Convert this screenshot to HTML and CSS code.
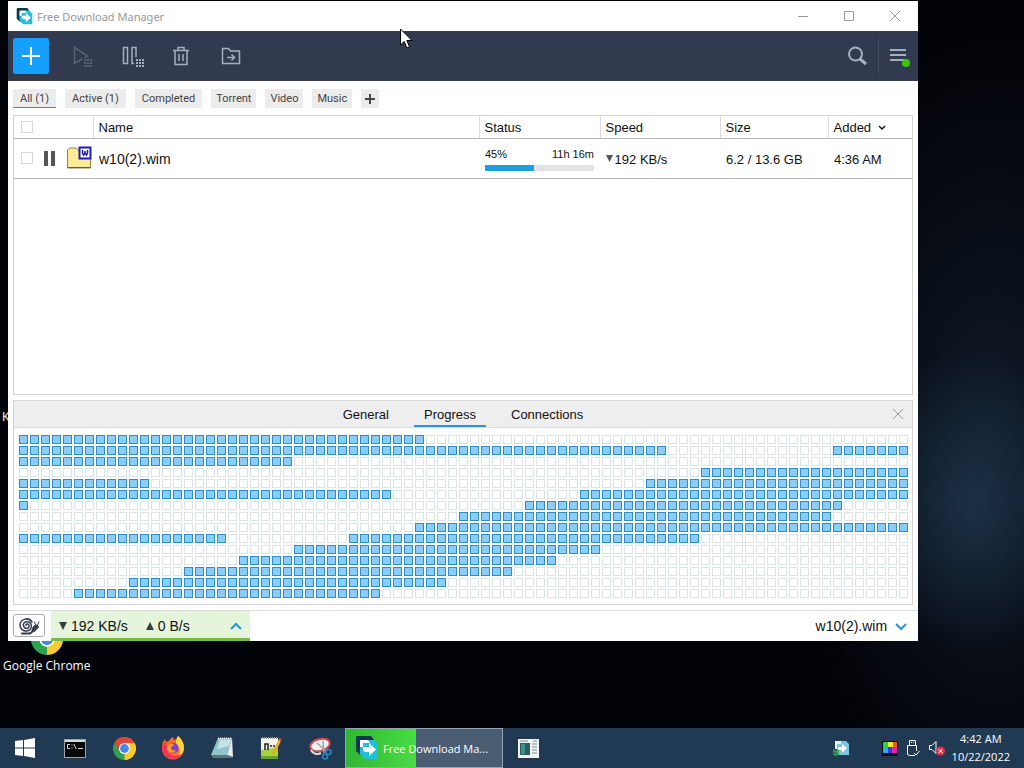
FILE: index.html
```
<!DOCTYPE html>
<html lang="en">
<head>
    <meta charset="UTF-8">
    <meta name="viewport" content="width=device-width, initial-scale=1.0">
    <title>Free Download Manager</title>
    <link rel="stylesheet" href="styles.css">
</head>
<body>
    <!-- shared icons -->
    <svg class="defs" aria-hidden="true">
        <symbol id="fdm" viewBox="0 0 24 24">
            <path d="M2 0h14l3 4H7v15H5l-4-4V1z" fill="#0b3a4f"/>
            <path d="M5 4h14l4 4v15H10l-5-5z" fill="#1fc0dc"/>
            <path d="M5 4h8l2 3H8v4H5z" fill="#fff"/>
            <path d="M8 11h6V7l7 6.500-7 6.500v-4H10l-2-2z" fill="#fff"/>
        </symbol>
        <symbol id="chrome" viewBox="0 0 24 24">
            <path d="M12 12L1.600 6A12 12 0 0 1 22.400 6z" fill="#e04638"/>
            <path d="M12 12L22.400 6A12 12 0 0 1 12 24z" fill="#fbcb2e"/>
            <path d="M12 12L12 24A12 12 0 0 1 1.600 6z" fill="#2fa152"/>
            <path d="M12 6h10.400L17 15l-5 9z" fill="#fbcb2e"/>
            <path d="M12 6H22.400A12 12 0 0 0 1.600 6L7 15z" fill="#e04638"/>
            <circle cx="12" cy="12" r="5.800" fill="#fff"/>
            <circle cx="12" cy="12" r="4.600" fill="#4286ee"/>
        </symbol>
    </svg>

    <main class="desktop">
        <div class="shortcut shortcut-k">K</div>
        <div class="shortcut shortcut-chrome">
            <svg width="32" height="32"><use href="#chrome"/></svg>
            <span>Google Chrome</span>
        </div>

        <section class="window">
            <header class="titlebar">
                <svg width="17" height="17"><use href="#fdm"/></svg>
                <span class="title">Free Download Manager</span>
                <button class="win-btn" aria-label="Minimize"><svg width="12" height="12"><path d="M1 6.500h10"/></svg></button>
                <button class="win-btn" aria-label="Maximize"><svg width="12" height="12"><path d="M1.500 1.500h9v9h-9z"/></svg></button>
                <button class="win-btn" aria-label="Close"><svg width="12" height="12"><path d="M1 1l10 10M11 1L1 11"/></svg></button>
            </header>

            <nav class="toolbar">
                <button class="tool add" aria-label="Add download">
                    <svg width="20" height="20"><path d="M10 1v18M1 10h18" stroke="#fff" stroke-width="2"/></svg>
                </button>
                <button class="tool" aria-label="Start all" disabled>
                    <svg width="24" height="24" viewBox="0 0 24 24">
                        <path d="M13 15l-7.500 4.500v-16L18.500 12l-3 2"/>
                        <path class="dots" d="M15 15h2v2h-2zm3 0h2v2h-2zm3 0h2v2h-2zM15 18h2v2h-2zm3 0h2v2h-2zm3 0h2v2h-2zM15 21h2v2h-2zm3 0h2v2h-2zm3 0h2v2h-2z"/>
                    </svg>
                </button>
                <button class="tool" aria-label="Pause all">
                    <svg width="24" height="24" viewBox="0 0 24 24">
                        <path d="M4.500 3.500h4v16h-4zM17 13V3.500h-4v16h2"/>
                        <path class="dots" d="M17 15h2v2h-2zm3 0h2v2h-2zm3 0h2v2h-2zM17 18h2v2h-2zm3 0h2v2h-2zm3 0h2v2h-2zM17 21h2v2h-2zm3 0h2v2h-2zm3 0h2v2h-2z"/>
                    </svg>
                </button>
                <button class="tool" aria-label="Delete">
                    <svg width="20" height="20" viewBox="0 0 20 20">
                        <path d="M2 4.500h16M7 4V1.500h6V4M4 5v13.500h12V5M8 8v7M12 8v7"/>
                    </svg>
                </button>
                <button class="tool" aria-label="Move to folder">
                    <svg width="20" height="20" viewBox="0 0 20 20">
                        <path d="M1.500 17.500v-15h6l2 2.500h9v12.500zM6 11.500h7M10.500 8.500l3 3-3 3"/>
                    </svg>
                </button>
                <div class="spacer"></div>
                <button class="tool search" aria-label="Search">
                    <svg width="20" height="20" viewBox="0 0 20 20"><circle cx="8.500" cy="8" r="6.500" stroke-width="2"/><path d="M13 13l6 5" stroke-width="3"/></svg>
                </button>
                <button class="tool menu" aria-label="Menu">
                    <svg width="22" height="22" viewBox="0 0 22 22"><path d="M2 5h16M2 10h16M2 15h16" stroke-width="2"/><circle class="online" cx="18" cy="18" r="4"/></svg>
                </button>
            </nav>

            <div class="filters">
                <button class="filter active">All (1)</button>
                <button class="filter">Active (1)</button>
                <button class="filter">Completed</button>
                <button class="filter tag">Torrent</button>
                <button class="filter tag">Video</button>
                <button class="filter tag">Music</button>
                <button class="filter plus" aria-label="Add filter"><svg width="10" height="10"><path d="M5 0v10M0 5h10" stroke="#444" stroke-width="2"/></svg></button>
            </div>

            <div class="downloads">
                <table>
                    <colgroup>
                        <col class="col-tools"><col><col class="col-status"><col class="col-speed"><col class="col-size"><col class="col-added">
                    </colgroup>
                    <thead>
                        <tr>
                            <th class="tools"><input type="checkbox" aria-label="Select all"></th>
                            <th>Name</th>
                            <th>Status</th>
                            <th>Speed</th>
                            <th>Size</th>
                            <th>Added <svg class="sort" width="8" height="6"><path d="M1 1l3 3 3-3"/></svg></th>
                        </tr>
                    </thead>
                    <tbody>
                        <tr>
                            <td class="tools">
                                <div class="row-tools">
                                    <input type="checkbox" aria-label="Select w10(2).wim">
                                    <button class="pause" aria-label="Pause"><svg width="11" height="15"><path d="M0 0h4v15H0zM7 0h4v15H7z" fill="#555"/></svg></button>
                                    <svg width="26" height="24" viewBox="0 0 26 24">
                                        <path d="M1.500 22V4l2-2h7l2 2.500h12V22z" fill="#fbeb98" stroke="#93853f"/>
                                        <path d="M2 21.500h22.500" stroke="#6b602c"/>
                                        <path d="M13.500 1.500h11v11h-11z" fill="#fff" stroke="#1c1cb8" stroke-width="2"/>
                                        <path d="M16.500 4v3l1 2 1.500-2 1.500 2 1-2V4M19 5v3" fill="none" stroke="#1c1cb8" stroke-width="1.500"/>
                                    </svg>
                                </div>
                            </td>
                            <td class="name">w10(2).wim</td>
                            <td>
                                <div class="status-text"><span>45%</span><span>11h 16m</span></div>
                                <div class="bar"><div class="bar-fill" style="width: 45%"></div></div>
                            </td>
                            <td class="speed"><svg width="7" height="7"><path d="M0 0h7L3.500 7z" fill="#555"/></svg> 192 KB/s</td>
                            <td>6.2 / 13.6 GB</td>
                            <td>4:36 AM</td>
                        </tr>
                    </tbody>
                </table>
            </div>

            <section class="details">
                <div class="tabs">
                    <button class="tab">General</button>
                    <button class="tab current">Progress</button>
                    <button class="tab">Connections</button>
                    <button class="tabs-close" aria-label="Close panel"><svg width="12" height="12"><path d="M1 1l10 10M11 1L1 11" stroke="#999"/></svg></button>
                </div>
                <div class="pieces" id="pieces"></div>
            </section>

            <footer class="statusbar">
                <button class="snail" aria-label="Snail mode">
                    <svg width="22" height="18" viewBox="0 0 22 18" fill="none" stroke="#333c4c" stroke-linecap="round">
                        <path d="M8 8.500a1.500 1.500 0 0 1 2-1.500a2.500 2.500 0 0 1-1 4.500a3.500 3.500 0 0 1-3-5.500a4.500 4.500 0 0 1 7 1a5 5 0 0 1-4 7a6 6 0 0 1-7-6a6.500 6.500 0 0 1 12-3" stroke-width="1.500"/>
                        <path d="M4 16.500h8l5-4" stroke-width="2"/>
                        <path d="M14 14c0-3 2-6 4-6s3 2 2 3-2 1-3 3z" fill="#333c4c"/>
                        <path d="M17.500 8l-1-3M19.500 8l1.500-3"/>
                    </svg>
                </button>
                <button class="speeds">
                    <svg width="8" height="8"><path d="M0 0h8L4 8z" fill="#33423a"/></svg>
                    <span class="down">192 KB/s</span>
                    <svg width="8" height="8"><path d="M0 8h8L4 0z" fill="#33423a"/></svg>
                    <span>0 B/s</span>
                    <svg class="chevron" width="12" height="8"><path d="M1 7l5-5 5 5"/></svg>
                </button>
                <button class="current-file">w10(2).wim <svg class="chevron" width="12" height="8"><path d="M1 1l5 5 5-5"/></svg></button>
            </footer>
        </section>

        <svg class="cursor" width="13" height="21" viewBox="0 0 13 21"><path d="M.5 1v16l3.700-3.500 2.700 6.500 2.600-1.200L6.800 12.500H12z" fill="#fff" stroke="#000"/></svg>
    </main>

    <footer class="taskbar">
        <button class="task start" aria-label="Start">
            <svg width="20" height="20"><path d="M0 3l8-1v7.500H0zM9 2l11-2v9.500H9zM0 10.500h8V18l-8-1zM9 10.500h11V20L9 18z" fill="#fff"/></svg>
        </button>
        <button class="task" aria-label="Command Prompt">
            <svg width="22" height="19"><path d="M0 0h22v19H0z" fill="#9ba3a8"/><path d="M1 3h20v15H1z" fill="#080808"/><path d="M1 1h20v2H1z" fill="#d6dadd"/><path d="M6 5.500H3.500v4H6M8 5.500v1M8 8.500v1M10 5l2 5M14 9.500h5" stroke="#ddd" fill="none"/></svg>
        </button>
        <button class="task" aria-label="Google Chrome"><svg width="23" height="23"><use href="#chrome"/></svg></button>
        <button class="task" aria-label="Firefox">
            <svg width="24" height="24" viewBox="0 0 24 24">
                <path d="M2 6l2-3 1 3 3-1c1-2 2-3 4-4l1 3c3-1 4-2 4-4 4 3 6 8 6 12a11 11 0 0 1-22 1c0-3 0-5 1-7z" fill="#ff6a2b"/>
                <path d="M17 0c4 3 6 8 6 12 0 5-4 9-8 10 4-4 5-10 1-13-2-2-1-6 1-9z" fill="#ffd23c"/>
                <path d="M1 13c1 6 6 10 11 10 4 0 8-2 10-6-4 3-9 4-13 1-3-2-3-5-1-7-3 0-4-2-3-5-3 1-4 4-4 7z" fill="#f5345d"/>
                <circle cx="12.500" cy="12" r="5" fill="#7a45c9"/>
                <path d="M7 9c2-2 4-1 6 0-1 2-3 1-3 3s3 3 5 2c-2 4-8 3-9-1z" fill="#ff9a2b"/>
            </svg>
        </button>
        <button class="task" aria-label="Notepad">
            <svg width="24" height="22" viewBox="0 0 24 22"><path d="M8 1h14l-5 17H1z" fill="#8fc5cc"/><path d="M10 3h11l-2 6-12 3z" fill="#c4e3e6"/><path d="M22 1l1 19-6-2z" fill="#e7eeee"/><path d="M1 18h16l6 2-1 1H3z" fill="#5d7478"/><path d="M8 1.500h14" stroke="#eee" stroke-width="2" stroke-dasharray="1 1"/></svg>
        </button>
        <button class="task" aria-label="Notepad++">
            <svg width="22" height="24" viewBox="0 0 22 24"><path d="M1 2h17v21H1z" fill="#f3f5e8"/><path d="M1 14l17-3v12H1z" fill="#a4d33b"/><path d="M1 20h17v3H1z" fill="#65a32c"/><path d="M2 2h15" stroke="#999" stroke-width="2" stroke-dasharray="1 1"/><path d="M5 14V8h3v6M10 10h2M13 10h2" stroke="#222" stroke-width="1.500" fill="none"/><path d="M19 3l2 2-6 12-3 2 1-4z" fill="#f0a52c"/><path d="M19 1l3 2-1 2-2-2z" fill="#c43c3c"/></svg>
        </button>
        <button class="task" aria-label="Snipping Tool">
            <svg width="24" height="24" viewBox="0 0 24 24"><ellipse cx="12" cy="9" rx="10" ry="6" transform="rotate(-15 12 9)" fill="#f5f0f0" stroke="#d7474b" stroke-width="2"/><path d="M3 14c2 4 6 5 10 3" stroke="#ddd" stroke-width="2" fill="none"/><path d="M9 7l9 8M15 5l1 12" stroke="#9aa4aa" stroke-width="1.500"/><g fill="none" stroke="#2f86c4" stroke-width="1.500"><circle cx="20.500" cy="16" r="2.500"/><circle cx="17" cy="20.500" r="2.500"/></g></svg>
        </button>
        <button class="task running">
            <svg width="24" height="24"><use href="#fdm"/></svg>
            <span>Free Download Ma...</span>
        </button>
        <button class="task" aria-label="Server window">
            <svg width="21" height="19"><path d="M0 0h21v19H0z" fill="#f0f3f3"/><path d="M2 4h10v12H2z" fill="#2c5d62"/><path d="M3 5h4v10H3z" fill="#3f8f86"/><path d="M14 5h5M14 8h5M14 11h5M14 14h5M2 2h8M15 2h4" stroke="#7e8d92"/></svg>
        </button>
        <div class="tray">
            <svg class="tray-fdm" width="17" height="16"><path d="M2 1h11l3 3v11H5z" fill="#77c6df"/><path d="M2 1h6v3H4v5H2z" fill="#e5f3f7"/><path d="M5 7h4V4l5 4-5 5v-3H5z" fill="#fff"/><path d="M0 10l3 2 3-2M0 13l3 2 3-2" stroke="#36a04a" stroke-width="2" fill="none"/></svg>
            <svg width="16" height="15"><path d="M0 0h16v15H0z" fill="#111"/><path d="M1 1h5v5H1z" fill="#2fd13c"/><path d="M6 1h5v5H6z" fill="#f4e52c"/><path d="M11 1h4v5h-4z" fill="#f25b22"/><path d="M1 6h5v6H1z" fill="#25aef0"/><path d="M6 6h4v6H6z" fill="#3a35e6"/><path d="M10 6h5v6h-5z" fill="#e022b2"/></svg>
            <svg width="13" height="17" fill="none" stroke="#fff"><path d="M2.500 5V.5h6V5M8 15.500H2.500l-2-1V5.500h9V11M4 2.500h1M6 2.500h1M7 13l2 2 3.500-4"/></svg>
            <svg width="16" height="16"><path d="M.5 5.500H3l4-4v12l-4-4H.5z" fill="none" stroke="#fff"/><circle cx="11.500" cy="11" r="4.500" fill="#d9304c"/><path d="M9.500 9l4 4M13.500 9l-4 4" stroke="#fff"/></svg>
            <div class="clock"><time>4:42 AM</time><time>10/22/2022</time></div>
        </div>
    </footer>

    <script>
        // downloaded pieces of the file, [first, last]
        const COLS = 81;
        const ROWS = 15;
        const done = [
            [[0, 36]],
            [[0, 58], [74, 80]],
            [[0, 24]],
            [[62, 80]],
            [[0, 11], [57, 80]],
            [[0, 33], [51, 80]],
            [[0, 0], [46, 74]],
            [[40, 73]],
            [[36, 80]],
            [[0, 18], [30, 61]],
            [[25, 52]],
            [[20, 48]],
            [[15, 44]],
            [[10, 38]],
            [[5, 32]]
        ];
        const pieces = document.getElementById('pieces');
        for (let row = 0; row < ROWS; row++) {
            for (let col = 0; col < COLS; col++) {
                const piece = document.createElement('i');
                if (done[row].some(([from, to]) => col >= from && col <= to)) {
                    piece.className = 'done';
                }
                pieces.appendChild(piece);
            }
        }
    </script>
</body>
</html>
```
FILE: styles.css
```
* {
    box-sizing: border-box;
}

body {
    margin: 0;
    height: 100vh;
    display: flex;
    flex-direction: column;
    overflow: hidden;
    background: #020308;
    font-family: "Liberation Sans", Arial, sans-serif;
    font-size: 13px;
    color: #111;
}

button {
    padding: 0;
    border: none;
    background: none;
    font: inherit;
    color: inherit;
}

svg {
    flex: none;
}

.defs {
    position: absolute;
    width: 0;
    height: 0;
}

/* desktop */
.desktop {
    position: relative;
    flex: 1;
    background:
        radial-gradient(ellipse 110px 150px at 95% 69%, #1b3045, transparent),
        radial-gradient(ellipse 200px 400px at 97% 60%, #101a28, transparent),
        #020308;
}

.shortcut {
    position: absolute;
    color: #fff;
    font-family: "Open Sans", "Noto Sans", sans-serif;
    font-size: 12px;
    line-height: 16px;
}

.shortcut-k {
    left: 2px;
    top: 409px;
}

.shortcut-chrome {
    left: 3px;
    top: 623px;
    display: flex;
    flex-direction: column;
    align-items: center;
    gap: 3px;
}

.cursor {
    position: absolute;
    left: 400px;
    top: 28px;
}

/* main window */
.window {
    position: absolute;
    left: 8px;
    right: 106px;
    top: 1px;
    bottom: 87px;
    display: flex;
    flex-direction: column;
    background: #fff;
}

.titlebar {
    display: flex;
    align-items: center;
    height: 30px;
    padding: 0 2px 0 8px;
    gap: 4px;
}

.title {
    flex: 1;
    font-family: "Noto Sans", "Open Sans", sans-serif;
    font-size: 11px;
    color: #999;
}

.win-btn {
    width: 42px;
    height: 30px;
}

.win-btn svg {
    display: block;
    margin: auto;
    fill: none;
    stroke: #999;
}

.toolbar {
    display: flex;
    align-items: center;
    gap: 14px;
    height: 50px;
    padding-left: 5px;
    background: #323a4f;
}

.tool {
    display: flex;
    align-items: center;
    justify-content: center;
    width: 36px;
    height: 36px;
    border-radius: 3px;
}

.tool svg {
    fill: none;
    stroke: #a3b0c2;
    stroke-width: 1.5;
    overflow: visible;
}

.tool:disabled svg {
    opacity: 0.35;
}

.tool .dots {
    fill: #a3b0c2;
    stroke: none;
}

.tool.add {
    background: #16a0fd;
}

.spacer {
    flex: 1;
}

.search {
    margin-right: -11px;
}

.menu {
    width: 40px;
    border-left: 1px solid #454d62;
    border-radius: 0;
}

.menu .online {
    fill: #3fc40c;
    stroke: none;
}

/* filters */
.filters {
    display: flex;
    gap: 9px;
    padding: 8px 5px 7px;
}

.filter {
    height: 19px;
    padding: 0 7px;
    background: #ececec;
    font-family: Roboto, "Noto Sans", sans-serif;
    font-size: 11px;
    line-height: 19px;
    color: #444;
}

.filter.active {
    border-bottom: 1px solid #2b8fd8;
}

.filter.tag {
    padding: 0 5px;
}

.filter.plus {
    padding: 0 4px;
}

.filter.plus svg {
    display: block;
}

/* downloads list */
.downloads {
    flex: 1;
    margin: 0 5px;
    border: 1px solid #d5d5d5;
}

table {
    width: 100%;
    table-layout: fixed;
    border-collapse: collapse;
}

.col-tools {
    width: 79px;
}

.col-status {
    width: 121px;
}

.col-speed {
    width: 120px;
}

.col-size {
    width: 108px;
}

.col-added {
    width: 84px;
}

th {
    height: 22px;
    padding: 2px 5px 0;
    border-left: 1px solid #dcdcdc;
    border-bottom: 1px solid #b8b8b8;
    font-weight: normal;
    text-align: left;
}

th:first-child {
    border-left: none;
}

td {
    height: 40px;
    padding: 2px 6px 0;
    border-bottom: 1px solid #b8b8b8;
}

td.name {
    font-size: 14px;
}

th.tools,
td.tools {
    padding: 0 0 0 7px;
}

input[type="checkbox"] {
    appearance: none;
    display: block;
    width: 12px;
    height: 12px;
    margin: 0;
    border: 1px solid #d8d8d8;
    background: #fff;
}

.row-tools {
    display: flex;
    align-items: center;
    gap: 11px;
}

.pause svg {
    display: block;
}

.sort {
    margin-left: 3px;
    vertical-align: 1px;
    fill: none;
    stroke: #111;
    stroke-width: 1.5;
}

.status-text {
    display: flex;
    justify-content: space-between;
    font-size: 11px;
    line-height: 13px;
}

.bar {
    height: 6px;
    margin-top: 4px;
    background: #e3e3e3;
}

.bar-fill {
    height: 100%;
    background: #1f9ede;
}

.speed svg {
    vertical-align: 2px;
    margin-right: -2px;
}

/* details panel */
.details {
    margin: 5px 5px;
    border: 1px solid #d5d5d5;
}

.tabs {
    position: relative;
    display: flex;
    justify-content: center;
    gap: 15px;
    height: 27px;
    background: #eee;
    border-bottom: 1px solid #dcdcdc;
}

.tab {
    padding: 2px 10px 0;
    border-bottom: 2px solid transparent;
}

.tab.current {
    border-color: #2b94d6;
}

.tabs-close {
    position: absolute;
    right: 8px;
    top: 7px;
}

.tabs-close svg {
    display: block;
}

.pieces {
    display: grid;
    grid-template-columns: repeat(81, 9px);
    grid-auto-rows: 9px;
    gap: 2px;
    padding: 7px 5px 6px;
}

.pieces i {
    border: 1px solid #dbe5e6;
}

.pieces .done {
    border-color: #2b8fc6;
    background: #8accfa;
}

/* status bar */
.statusbar {
    display: flex;
    height: 31px;
    padding-left: 5px;
    border-top: 1px solid #ddd;
    font-size: 14px;
}

.snail {
    width: 32px;
    height: 23px;
    margin: 3px 6px 0 0;
    border: 1px solid #aaa;
    border-radius: 3px;
}

.snail svg {
    display: block;
    margin: auto;
}

.speeds {
    display: flex;
    align-items: center;
    gap: 4px;
    width: 199px;
    padding: 0 8px;
    background: #e5f5dc;
    box-shadow: inset 0 -3px #75bd44;
}

.down {
    margin-right: 14px;
}

.chevron {
    fill: none;
    stroke: #2b94d6;
    stroke-width: 2;
}

.speeds .chevron {
    margin-left: auto;
}

.current-file {
    margin-left: auto;
    padding-right: 11px;
}

.current-file .chevron {
    margin-left: 4px;
}

/* taskbar */
.taskbar {
    display: flex;
    gap: 1px;
    height: 40px;
    background: #203a53;
    color: #fff;
    font-family: "Open Sans", "Noto Sans", sans-serif;
    font-size: 11px;
}

.task {
    display: flex;
    align-items: center;
    justify-content: center;
    width: 48px;
}

.task.start {
    width: 50px;
}

.task.running {
    justify-content: flex-start;
    gap: 4px;
    width: 158px;
    padding-left: 9px;
    border: 1px solid #94a5b2;
    background: linear-gradient(to right, #30b634, #48dc44 45%, #4b5d72 45%);
}

.tray {
    display: flex;
    align-items: center;
    gap: 9px;
    margin-left: auto;
    padding-right: 14px;
}

.tray-fdm {
    margin-right: 23px;
}

.clock {
    display: flex;
    flex-direction: column;
    align-items: center;
    margin-left: -2px;
    line-height: 18px;
}
```
